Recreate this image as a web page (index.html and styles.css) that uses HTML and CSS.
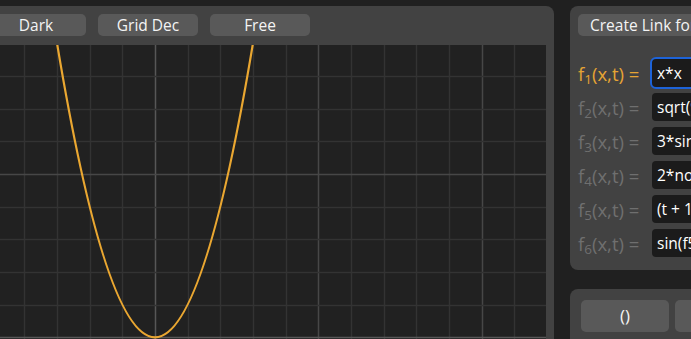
FILE: index.html
```html
<!DOCTYPE html>
<html lang="en">
<head>
    <meta charset="UTF-8">
    <meta name="viewport" content="width=device-width, initial-scale=1.0">
    <title>Function Plotter</title>
    <link rel="stylesheet" href="styles.css">
</head>
<body>
    <div class="app">
        <div class="plot-panel">
            <div class="toolbar">
                <button class="btn">Dark</button>
                <button class="btn">Grid Dec</button>
                <button class="btn">Free</button>
            </div>
            <svg class="plot" width="560" height="300" viewBox="0 0 560 300">
                <g id="grid"></g>
                <path d="M64.5 -42.2 Q169 626.8 273.5 -42.2" fill="none" stroke="#eaa731" stroke-width="2.2"/>
            </svg>
        </div>

        <div class="side">
            <div class="panel functions">
                <button class="btn wide">Create Link for Sharing</button>
                <div class="rows">
                    <div class="row active">
                        <span class="label">f<sub>1</sub>(x,t) =</span>
                        <input type="text" value="x*x">
                    </div>
                    <div class="row">
                        <span class="label">f<sub>2</sub>(x,t) =</span>
                        <input type="text" value="sqrt(9 - x*x)">
                    </div>
                    <div class="row">
                        <span class="label">f<sub>3</sub>(x,t) =</span>
                        <input type="text" value="3*sin(x + t)">
                    </div>
                    <div class="row">
                        <span class="label">f<sub>4</sub>(x,t) =</span>
                        <input type="text" value="2*noise(x, t)">
                    </div>
                    <div class="row">
                        <span class="label">f<sub>5</sub>(x,t) =</span>
                        <input type="text" value="(t + 1) % 4">
                    </div>
                    <div class="row">
                        <span class="label">f<sub>6</sub>(x,t) =</span>
                        <input type="text" value="sin(f5(x, t))">
                    </div>
                </div>
            </div>

            <div class="panel keys">
                <button class="btn key">()</button>
                <button class="btn key">+</button>
                <button class="btn key">-</button>
            </div>
        </div>
    </div>

    <script>
        // grid: origin at (169, 292.3), 32.67px per unit, major line every 5
        const grid = document.getElementById('grid');
        const ox = 169;
        const oy = 292.3;
        const step = 32.67;

        function line(x1, y1, x2, y2, color) {
            const el = document.createElementNS('http://www.w3.org/2000/svg', 'line');
            el.setAttribute('x1', x1);
            el.setAttribute('y1', y1);
            el.setAttribute('x2', x2);
            el.setAttribute('y2', y2);
            el.setAttribute('stroke', color);
            el.setAttribute('stroke-width', 1.5);
            grid.appendChild(el);
        }

        function colorFor(k) {
            if (k === 0) return '#575757';
            if (k % 5 === 0) return '#474747';
            return '#333333';
        }

        for (let k = -6; k <= 12; k++) {
            const x = Math.round(ox + k * step) + 0.5;
            line(x, 0, x, 300, colorFor(k));
        }
        for (let k = -1; k <= 10; k++) {
            const y = Math.round(oy - k * step) + 0.5;
            line(0, y, 560, y, colorFor(k));
        }
    </script>
</body>
</html>
```

FILE: styles.css
```css
body {
    margin: 0;
    background-color: #202020;
    font-family: "Open Sans", "Noto Sans", sans-serif;
    overflow: hidden;
}

.app {
    display: flex;
    gap: 16px;
    margin-left: -22px;
    padding-top: 6px;
}

.btn {
    height: 22px;
    padding: 0;
    border: none;
    border-radius: 5px;
    background-color: #595959;
    color: #f4f4f4;
    font-family: inherit;
    font-size: 15.5px;
    line-height: 22px;
}

.plot-panel {
    flex: none;
    width: 560px;
    height: 360px;
    padding: 8px 8px 0;
    background-color: #424242;
    border-radius: 8px 8px 0 0;
}

.toolbar {
    display: flex;
    gap: 12px;
    margin-bottom: 9px;
}

.toolbar .btn {
    width: 100px;
}

.plot {
    display: block;
    background-color: #212121;
}

.side {
    flex: none;
    width: 320px;
    display: flex;
    flex-direction: column;
    gap: 19px;
}

.panel {
    background-color: #424242;
    border-radius: 8px;
}

.functions {
    padding: 8px 8px 11px;
}

.btn.wide {
    width: 220px;
    text-align: left;
    padding-left: 12px;
}

.rows {
    display: flex;
    flex-direction: column;
    gap: 2px;
    margin-top: 21px;
}

.row {
    display: flex;
    align-items: center;
    height: 32px;
}

.label {
    width: 72px;
    color: #6f6f6f;
    font-size: 18.5px;
    white-space: nowrap;
}

.label sub {
    font-size: 13.5px;
    vertical-align: -3px;
    line-height: 0;
}

.row.active .label {
    color: #e6a434;
}

.row input {
    width: 200px;
    height: 32px;
    box-sizing: border-box;
    padding: 0 5px;
    border: 2px solid transparent;
    border-radius: 6px;
    background-color: #1b1b1b;
    background-clip: padding-box;
    color: #ffffff;
    font-family: inherit;
    font-size: 15.5px;
    outline: none;
}

.row.active input {
    border-color: #1d63d8;
    background-clip: border-box;
}

.keys {
    display: flex;
    gap: 6px;
    padding: 11px;
    height: 60px;
}

.btn.key {
    width: 88px;
    height: 32px;
    line-height: 32px;
    font-size: 17px;
}
```
